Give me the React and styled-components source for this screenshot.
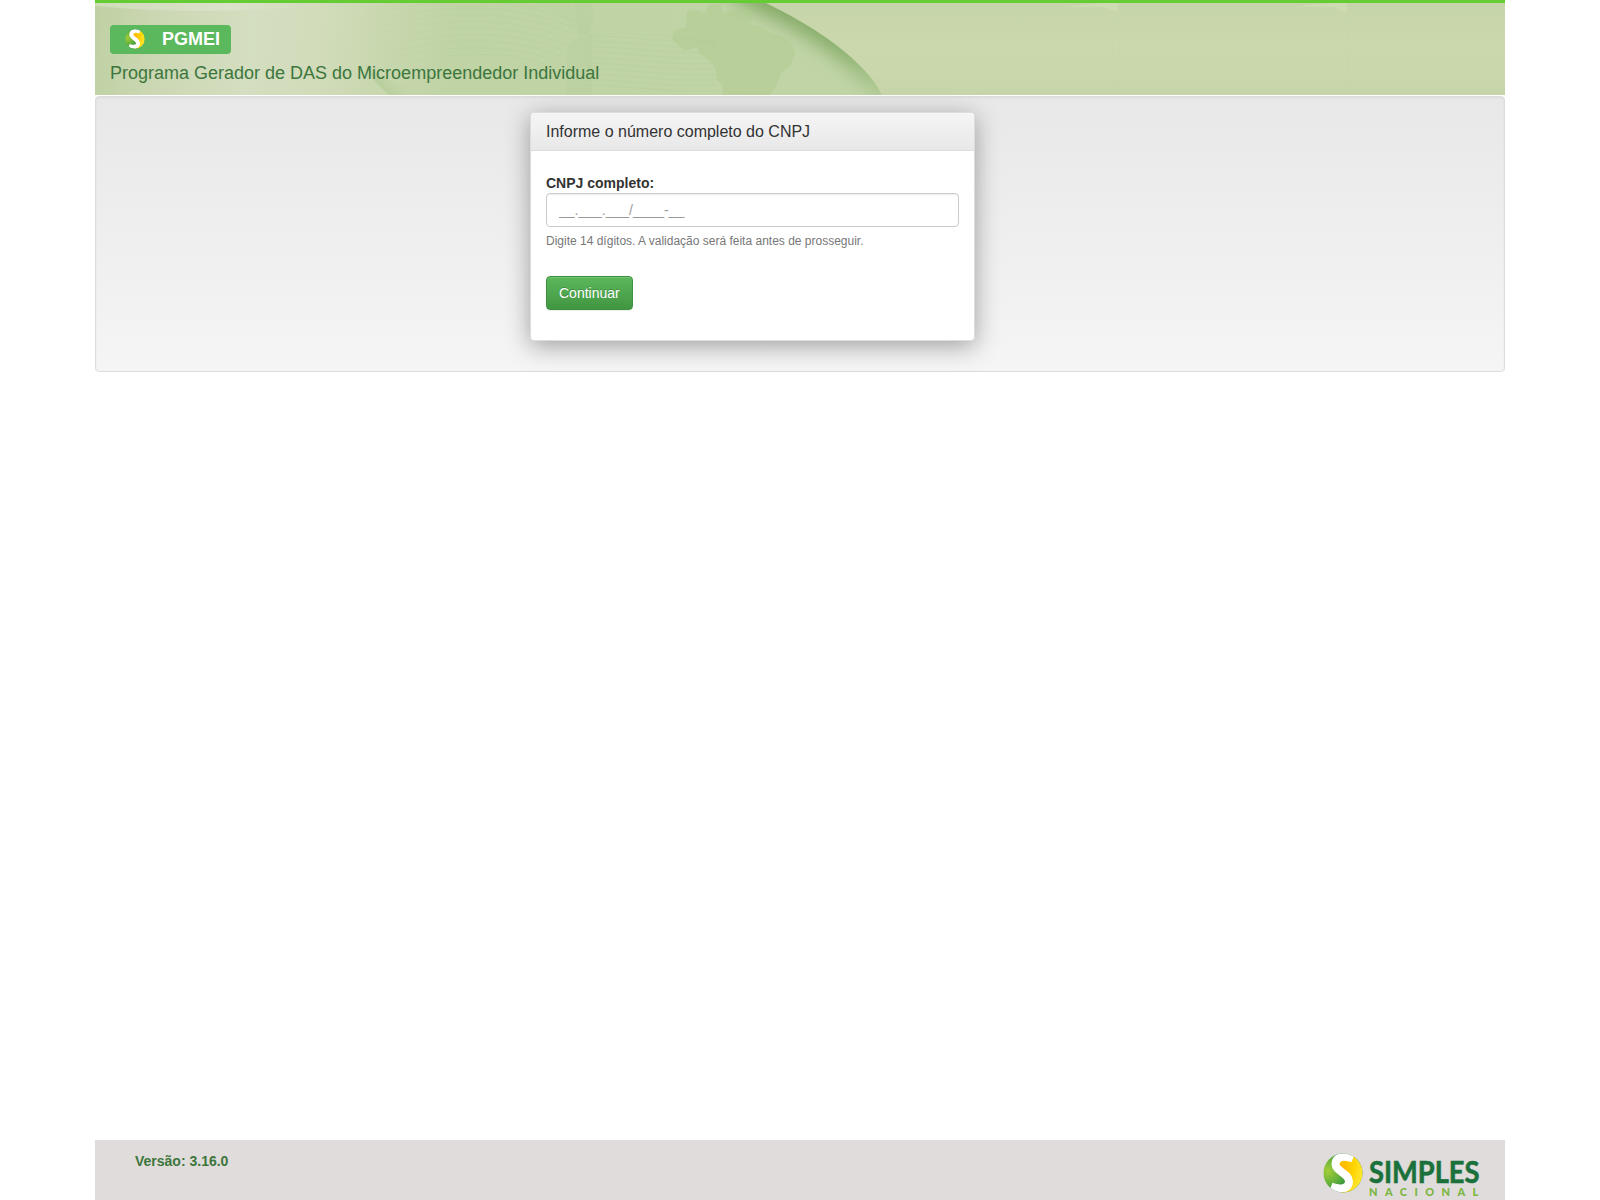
import React from "react";
import styled, { createGlobalStyle } from "styled-components";

const GlobalStyle = createGlobalStyle`
  * {
    box-sizing: border-box;
  }

  body {
    margin: 0;
    background: #fff;
    color: #333;
    font-family: "Liberation Sans", Arial, sans-serif;
    font-size: 14px;
    line-height: 20px;
  }
`;

const Page = styled.div`
  width: 1410px;
  height: 1200px;
  margin: 0 auto;
  display: flex;
  flex-direction: column;
`;

//--------------------------------------------------------------------------------
// Header
const HeaderBar = styled.header`
  position: relative;
  height: 95px;
  margin-bottom: 1px;
  padding: 22px 15px 0;
  border-top: 3px solid #66cc33;
  background: #cad6ab;
`;

const HeaderArt = styled.svg`
  position: absolute;
  top: 0;
  left: 0;
  display: block;
`;

const Brand = styled.div`
  position: relative;
  display: flex;
  flex-direction: column;
  align-items: flex-start;
`;

const Badge = styled.span`
  display: flex;
  align-items: flex-start;
  width: 121px;
  height: 29px;
  padding: 3px 0 0 14px;
  border-radius: 4px;
  background: #5cb85c;
  color: #fff;
  font-size: 18px;
  font-weight: bold;
  line-height: 22px;
`;

const BadgeName = styled.span`
  margin-left: 16px;
`;

const AppName = styled.span`
  margin-top: 7px;
  color: #3c763d;
  font-size: 18px;
  line-height: 25px;
`;

//--------------------------------------------------------------------------------
// Form
const Well = styled.main`
  height: 276px;
  padding: 15px 0 0 434px;
  border: 1px solid #dcdcdc;
  border-radius: 4px;
  background: linear-gradient(to bottom, #e8e8e8 0%, #f5f5f5 100%);
  box-shadow: inset 0 1px 3px rgba(0, 0, 0, 0.05), 0 1px 0 rgba(255, 255, 255, 0.1);
`;

const Panel = styled.section`
  width: 445px;
  height: 229px;
  border: 1px solid #ddd;
  border-radius: 4px;
  background: #fff;
  box-shadow: 0 5px 25px rgba(0, 0, 0, 0.35);
`;

const PanelHeading = styled.div`
  height: 38px;
  padding: 10px 15px;
  border-bottom: 1px solid #ddd;
  border-radius: 3px 3px 0 0;
  background: linear-gradient(to bottom, #f5f5f5 0%, #e8e8e8 100%);
`;

const PanelTitle = styled.h3`
  margin: 0;
  font-size: 16px;
  font-weight: normal;
  line-height: 18px;
`;

const Form = styled.form`
  display: flex;
  flex-direction: column;
  align-items: flex-start;
  padding: 22px 15px 0;
`;

const Label = styled.label`
  font-weight: bold;
`;

const Input = styled.input`
  width: 100%;
  height: 34px;
  padding: 6px 12px;
  border: 1px solid #ccc;
  border-radius: 4px;
  background: #fff;
  color: #555;
  font-family: inherit;
  font-size: 14px;
  line-height: 20px;
  box-shadow: inset 0 1px 1px rgba(0, 0, 0, 0.075);

  &::placeholder {
    color: #999;
    opacity: 1;
  }
`;

const Help = styled.small`
  margin-top: 6px;
  color: #777;
  font-size: 12px;
  line-height: 17px;
`;

const Button = styled.button`
  height: 34px;
  margin-top: 26px;
  padding: 6px 12px;
  border: 1px solid #3e8f3e;
  border-radius: 4px;
  background: linear-gradient(to bottom, #5cb85c 0%, #419641 100%);
  box-shadow: inset 0 1px 0 rgba(255, 255, 255, 0.15), 0 1px 1px rgba(0, 0, 0, 0.075);
  color: #fff;
  font-family: inherit;
  font-size: 14px;
  line-height: 20px;
  text-shadow: 0 -1px 0 rgba(0, 0, 0, 0.2);
`;

//--------------------------------------------------------------------------------
// Footer
const FooterBar = styled.footer`
  display: flex;
  justify-content: space-between;
  height: 60px;
  margin-top: auto;
  padding: 11px 24px 0 40px;
  background: #e0dcdb;
`;

const Version = styled.span`
  color: #3c763d;
  font-weight: bold;
`;

const Logo = styled.svg`
  display: block;
  overflow: visible;
`;

const Globe = ({ id }) => (
  <>
    <defs>
      <radialGradient id={`${id}-green`} cx="0.12" cy="0.45" r="0.65">
        <stop offset="0" stopColor="#a4cd39" />
        <stop offset="0.5" stopColor="#62b03b" />
        <stop offset="1" stopColor="#128040" />
      </radialGradient>
      <radialGradient id={`${id}-yellow`} cx="0.3" cy="0.35" r="0.75">
        <stop offset="0" stopColor="#ffb800" />
        <stop offset="0.5" stopColor="#ffd400" />
        <stop offset="1" stopColor="#fee93a" />
      </radialGradient>
      <clipPath id={`${id}-clip`}>
        <circle cx="20" cy="20" r="19.5" />
      </clipPath>
    </defs>
    <g clipPath={`url(#${id}-clip)`}>
      <rect width="40" height="40" fill={`url(#${id}-green)`} />
      <path
        d="M29 0 V6 C22 2 12 4 12 11 C12 19 27 20 27 29 C27 34 22 38 17 40 H40 V0 Z"
        fill={`url(#${id}-yellow)`}
      />
      <path
        d="M30 5.5 C22 2 12.5 3.5 12.5 11 C12.5 18.5 26 20 26 28.5 C26 36 17 37 8 33.5"
        fill="none"
        stroke="#fff"
        strokeWidth="8"
      />
    </g>
  </>
);

const ContourLines = () => {
  const arcs = [];
  for (let i = 0; i < 9; i++) {
    const y = i * 7;
    arcs.push(
      <path key={`a${i}`} d={`M215 ${y + 32} C290 ${y + 2} 390 ${y - 20} ${484 - i * 3} ${y * 0.8 + 20}`} />
    );
  }
  for (let i = 0; i < 10; i++) {
    const y = 33 + i * 5.5;
    arcs.push(
      <path key={`b${i}`} d={`M492 ${y} C530 ${y - 1} 570 ${y + 8} 622 ${y + 5}`} />
    );
  }
  for (let i = 0; i < 6; i++) {
    arcs.push(
      <path key={`c${i}`} d={`M${440 + i * 8} 0 Q${474 + i * 3} 10 ${484 + i * 2} 31`} />
    );
  }
  return (
    <g fill="none" stroke="url(#contour)">
      {arcs}
    </g>
  );
};

const HeaderBackground = () => (
  <HeaderArt width="1410" height="92" viewBox="0 0 1410 92" aria-hidden="true">
    <defs>
      <linearGradient id="globe" x1="0" y1="0" x2="790" y2="90" gradientUnits="userSpaceOnUse">
        <stop offset="0" stopColor="#bfd1a3" />
        <stop offset="0.09" stopColor="#ccd8b4" />
        <stop offset="0.2" stopColor="#d4dec0" />
        <stop offset="0.28" stopColor="#d2dcbb" />
        <stop offset="0.37" stopColor="#c8d7ae" />
        <stop offset="0.46" stopColor="#bfd3a4" />
        <stop offset="1" stopColor="#c1d4a6" />
      </linearGradient>
      <linearGradient id="contour" x1="215" y1="0" x2="622" y2="0" gradientUnits="userSpaceOnUse">
        <stop offset="0" stopColor="#aeca91" stopOpacity="0" />
        <stop offset="0.35" stopColor="#aeca91" stopOpacity="0.25" />
        <stop offset="1" stopColor="#aeca91" stopOpacity="0.3" />
      </linearGradient>
      <linearGradient id="wave" x1="0" y1="0" x2="270" y2="0" gradientUnits="userSpaceOnUse">
        <stop offset="0" stopColor="#d0dcb9" />
        <stop offset="0.5" stopColor="#dae2c9" />
        <stop offset="1" stopColor="#ccd9b3" />
      </linearGradient>
      <linearGradient id="fold" x1="278" y1="88" x2="305" y2="66" gradientUnits="userSpaceOnUse">
        <stop offset="0" stopColor="#afc992" />
        <stop offset="1" stopColor="#bfd3a4" stopOpacity="0" />
      </linearGradient>
      <linearGradient id="rim" x1="0" y1="0" x2="0" y2="92" gradientUnits="userSpaceOnUse">
        <stop offset="0" stopColor="#82a965" />
        <stop offset="0.5" stopColor="#89af6c" />
        <stop offset="1" stopColor="#b2cc96" />
      </linearGradient>
      <linearGradient id="tile-edge" x1="0" y1="0" x2="0" y2="1">
        <stop offset="0" stopColor="#c5d5a9" />
        <stop offset="0.4" stopColor="#cbd7ad" />
        <stop offset="0.8" stopColor="#cad6ab" />
        <stop offset="1" stopColor="#c5d5a9" />
      </linearGradient>
      <filter id="soft" x="-20%" y="-20%" width="140%" height="140%">
        <feGaussianBlur stdDeviation="9" />
      </filter>
      <clipPath id="globe-clip">
        <path d="M0 0 H671 C718 23 768 55 787 92 H0 Z" />
      </clipPath>
    </defs>
    <rect width="1410" height="92" fill="url(#tile-edge)" />
    <path d="M970 4 Q1005 -1 1023 0 V9 Q1015 8 1010 4 Z" fill="#cedbb0" />
    <path d="M1200 4 Q1235 -1 1252 0 V9 Q1244 8 1239 4 Z" fill="#cedbb0" />
    <path d="M1024.5 0 V92 M1252.5 0 V92" stroke="#c6d5a7" strokeOpacity="0.7" />
    <g clipPath="url(#globe-clip)">
      <rect width="800" height="92" fill="url(#globe)" />
      <path d="M270 62 C275 72 284 85 295 92 H345 C320 86 290 80 270 62 Z" fill="url(#fold)" />
      <ContourLines />
      <path
        d="M480 0 H497 Q502 15 494 31 Q480 31 484 35 Z M472 92 V47 Q475 32 500 31 Q575 28 622 45 L622 38 Q565 29 497 30 V92 Z"
        fill="#b5cc98"
        opacity="0.25"
      />
      {/* shading along the globe's edge */}
      <path
        d="M640 -18 C718 15 768 49 799 100"
        fill="none"
        stroke="url(#rim)"
        strokeWidth="28"
        filter="url(#soft)"
      />
      {/* map of Brazil */}
      <path
        d="M592 8 L603 7 L610 11 L613 2 L625 0 L628 10 L639 7 L649 9 L653 5 L658 14 L655 22 L664 23 L674 29 L688 34 L697 41 L700 51 L695 63 L686 70 L682 82 L675 92 H627 L628 83 L622 77 L621 67 L616 59 L604 50 L602 44 L590 48 L584 43 L577 36 L579 28 L591 24 Z"
        fill="#b0ca8e"
        opacity="0.45"
      />
    </g>
    <path d="M0 3 Q115 14 250 0 H0 Z" fill="url(#wave)" />
  </HeaderArt>
);

const App = () => {
  return (
    <>
      <GlobalStyle />
      <Page>
        <HeaderBar>
          <HeaderBackground />
          <Brand>
            <Badge>
              <Logo width="22" height="22" viewBox="-2 -2 44 44">
                <Globe id="badge" />
              </Logo>
              <BadgeName>PGMEI</BadgeName>
            </Badge>
            <AppName>Programa Gerador de DAS do Microempreendedor Individual</AppName>
          </Brand>
        </HeaderBar>

        <Well>
          <Panel>
            <PanelHeading>
              <PanelTitle>Informe o número completo do CNPJ</PanelTitle>
            </PanelHeading>
            <Form onSubmit={(e) => e.preventDefault()}>
              <Label htmlFor="cnpj">CNPJ completo:</Label>
              <Input id="cnpj" type="text" placeholder="__.___.___/____-__" />
              <Help>Digite 14 dígitos. A validação será feita antes de prosseguir.</Help>
              <Button type="submit">Continuar</Button>
            </Form>
          </Panel>
        </Well>

        <FooterBar>
          <Version>Versão: 3.16.0</Version>
          <Logo width="160" height="48" viewBox="0 0 160 48" role="img" aria-label="Simples Nacional">
            <g transform="translate(2 2)">
              <Globe id="footer" />
            </g>
            <text
              x="48"
              y="31.5"
              fill="#1b713b"
              stroke="#1b713b"
              strokeWidth="0.6"
              fontFamily="Lato, sans-serif"
              fontSize="30"
              fontWeight="700"
              textLength="110.5"
              lengthAdjust="spacingAndGlyphs"
            >
              SIMPLES
            </text>
            <text
              x="48"
              y="45"
              fill="#7ab63f"
              fontFamily="Lato, sans-serif"
              fontSize="11"
              fontWeight="900"
              letterSpacing="7.4"
            >
              NACIONAL
            </text>
          </Logo>
        </FooterBar>
      </Page>
    </>
  );
};

export default App;
